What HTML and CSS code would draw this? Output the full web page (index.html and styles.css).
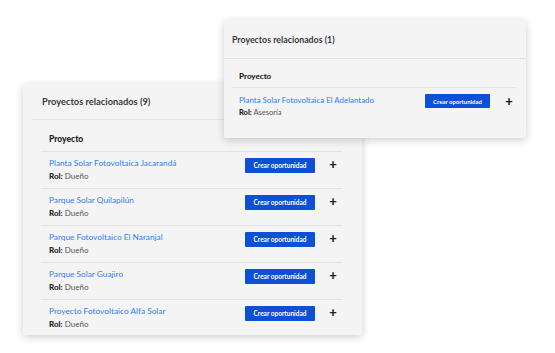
FILE: index.html
```html
<!DOCTYPE html>
<html lang="es">
<head>
    <meta charset="UTF-8">
    <meta name="viewport" content="width=device-width, initial-scale=1.0">
    <title>Proyectos relacionados</title>
    <link rel="stylesheet" href="styles.css">
</head>
<body>
    <div class="stage">
        <!-- tarjeta de fondo -->
        <div class="card card-back">
            <div class="card-head">Proyectos relacionados (9)</div>
            <div class="table">
                <div class="table-head">Proyecto</div>
                <div class="row">
                    <div class="info">
                        <a href="#" class="link">Planta Solar Fotovoltaica Jacarandá</a>
                        <div class="rol"><b>Rol:</b> Dueño</div>
                    </div>
                    <button class="button">Crear oportunidad</button>
                    <span class="plus">+</span>
                </div>
                <div class="row">
                    <div class="info">
                        <a href="#" class="link">Parque Solar Quilapilún</a>
                        <div class="rol"><b>Rol:</b> Dueño</div>
                    </div>
                    <button class="button">Crear oportunidad</button>
                    <span class="plus">+</span>
                </div>
                <div class="row">
                    <div class="info">
                        <a href="#" class="link">Parque Fotovoltaico El Naranjal</a>
                        <div class="rol"><b>Rol:</b> Dueño</div>
                    </div>
                    <button class="button">Crear oportunidad</button>
                    <span class="plus">+</span>
                </div>
                <div class="row">
                    <div class="info">
                        <a href="#" class="link">Parque Solar Guajiro</a>
                        <div class="rol"><b>Rol:</b> Dueño</div>
                    </div>
                    <button class="button">Crear oportunidad</button>
                    <span class="plus">+</span>
                </div>
                <div class="row">
                    <div class="info">
                        <a href="#" class="link">Proyecto Fotovoltaico Alfa Solar</a>
                        <div class="rol"><b>Rol:</b> Dueño</div>
                    </div>
                    <button class="button">Crear oportunidad</button>
                    <span class="plus">+</span>
                </div>
            </div>
        </div>

        <!-- tarjeta superpuesta -->
        <div class="card card-front">
            <div class="card-head">Proyectos relacionados (1)</div>
            <div class="table">
                <div class="table-head">Proyecto</div>
                <div class="row">
                    <div class="info">
                        <a href="#" class="link">Planta Solar Fotovoltaica El Adelantado</a>
                        <div class="rol"><b>Rol:</b> Asesoría</div>
                    </div>
                    <button class="button">Crear oportunidad</button>
                    <span class="plus">+</span>
                </div>
            </div>
        </div>
    </div>
</body>
</html>
```

FILE: styles.css
```css
body {
    margin: 0;
    background: #ffffff;
    font-family: Lato, "Open Sans", sans-serif;
    color: #333333;
}
.stage {
    position: relative;
    width: 555px;
    height: 353px;
    padding: 84px 0 0 23px;
    box-sizing: border-box;
}
.card {
    background-color: #f4f4f4;
    border-radius: 2px;
    box-shadow: 0 2px 8px rgba(0, 0, 0, 0.2);
}
.card-back {
    width: 339px;
    height: 251px;
}
.card-front {
    position: absolute;
    left: 224px;
    top: 20px;
    width: 302px;
    height: 118px;
}
.card-head {
    height: 35px;
    display: flex;
    align-items: center;
    padding-left: 10px;
    margin-left: 9px;
    border-bottom: 1px solid #e3e3e3;
    font-size: 9.3px;
    font-weight: 700;
    color: #3a3a3a;
}
.table {
    margin: 0 20px 0 18px;
}
.table-head {
    height: 32px;
    box-sizing: border-box;
    display: flex;
    align-items: flex-end;
    padding: 0 0 7px 8px;
    border-bottom: 1px solid #e3e3e3;
    font-size: 8.5px;
    line-height: 10px;
    font-weight: 900;
    color: #222222;
}
.row {
    height: 37px;
    box-sizing: border-box;
    display: flex;
    align-items: flex-start;
    padding: 6px 5px 0 8px;
    border-bottom: 1px solid #e3e3e3;
}
.row:last-child {
    border-bottom: none;
    height: 34px;
}
.info {
    flex: 1;
}
.link {
    display: block;
    font-size: 8.3px;
    line-height: 10px;
    color: #2f7ef5;
    text-decoration: none;
}
.rol {
    margin-top: 3px;
    font-size: 8px;
    line-height: 10px;
    color: #555555;
}
.rol b {
    color: #222222;
    font-weight: 900;
}
.button {
    width: 70px;
    height: 15px;
    padding: 0;
    border: none;
    border-radius: 1px;
    background-color: #0b50d5;
    color: #ffffff;
    font-family: inherit;
    font-size: 6.5px;
    font-weight: 700;
    cursor: pointer;
}
.plus {
    width: 8px;
    margin-left: 14px;
    font-size: 13px;
    line-height: 12px;
    font-weight: 900;
    color: #222222;
    text-align: center;
}

/* tarjeta superpuesta, un poco más compacta */
.card-front .card-head {
    height: 38px;
    margin-left: 0;
    padding-left: 8px;
    font-size: 8.8px;
}
.card-front .table {
    margin: 0 10px 0 8px;
}
.card-front .table-head {
    height: 29px;
    padding: 0 0 6px 7px;
    font-size: 8px;
}
.card-front .row {
    height: 49px;
    padding: 7px 3px 0 7px;
}
.card-front .link {
    font-size: 7.9px;
}
.card-front .rol {
    margin-top: 3px;
    font-size: 7.5px;
}
.card-front .button {
    width: 65px;
    height: 14px;
    margin-top: -1px;
    font-size: 6px;
}
.card-front .plus {
    margin-left: 15px;
}
```
